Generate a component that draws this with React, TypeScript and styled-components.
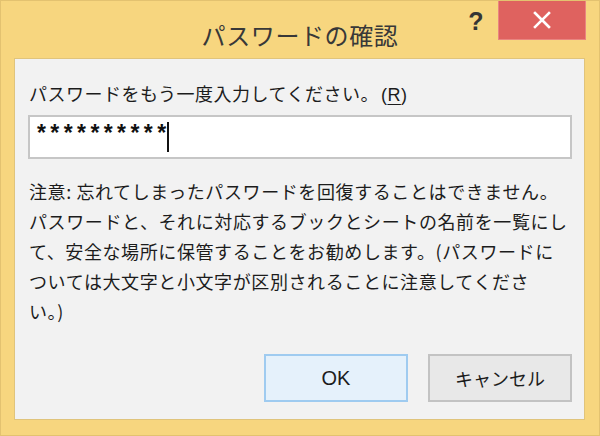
import React from "react";
import styled, { createGlobalStyle } from "styled-components";

const Global = createGlobalStyle`
  html, body { margin: 0; padding: 0; }
  body {
    width: 600px;
    height: 436px;
    overflow: hidden;
    font-family: "Noto Sans CJK JP", "Noto Sans", sans-serif;
    background: #f6d57e;
  }
`;

const Window = styled.div`
  box-sizing: border-box;
  width: 600px;
  height: 436px;
  display: flex;
  flex-direction: column;
  background: #f7d67f;
  border: 1px solid #e3c270;
`;

const TitleBar = styled.div`
  height: 57px;
  display: grid;
  grid-template-columns: 1fr auto 1fr;
  align-items: start;
  flex-shrink: 0;
`;

const Title = styled.div`
  grid-column: 2;
  margin-top: 19px;
  font-size: 24px;
  line-height: 30px;
  letter-spacing: 0.6px;
  color: #383838;
  white-space: nowrap;
`;

const Controls = styled.div`
  grid-column: 3;
  justify-self: end;
  display: flex;
  align-items: flex-start;
  margin-right: 13px;
`;

const HelpButton = styled.div`
  width: 44px;
  height: 39px;
  display: flex;
  justify-content: center;
  padding-top: 6px;
  box-sizing: border-box;
  font-family: "Liberation Sans", Arial, sans-serif;
  font-weight: bold;
  font-size: 25px;
  line-height: 28px;
  color: #353535;
`;

const CloseButton = styled.div`
  width: 88px;
  height: 39px;
  background: #df625f;
  border: 1px solid #e98580;
  border-top: none;
  box-sizing: border-box;
  display: flex;
  align-items: center;
  justify-content: center;
`;

const Panel = styled.div`
  flex: 1;
  margin: 0 14px 15px 13px;
  background: #f2f2f2;
  border: 1px solid #e0c47c;
  box-sizing: border-box;
  display: flex;
  flex-direction: column;
  padding: 21px 12px 17px 13px;
  color: #1c1c1c;
`;

const Label = styled.div`
  font-size: 18px;
  line-height: 26px;
  letter-spacing: 0.5px;
  white-space: nowrap;
  padding-left: 1px;
`;

const Latin = styled.span`
  font-family: "Liberation Sans", Arial, sans-serif;
  letter-spacing: 0.5px;
  margin-left: 2px;
`;

const Underlined = styled.span`
  text-decoration: underline;
  text-underline-offset: 3px;
`;

const InputBox = styled.div`
  margin-top: 7px;
  height: 44px;
  box-sizing: border-box;
  background: #ffffff;
  border: 2px solid #c6c6c6;
  display: flex;
  align-items: center;
  padding-left: 7px;
`;

const Masked = styled.span`
  font-family: "Liberation Sans", Arial, sans-serif;
  font-weight: bold;
  font-size: 23px;
  line-height: 30px;
  letter-spacing: 4.4px;
  color: #111;
  position: relative;
  top: -4px;
  margin-right: -4.4px;
`;

const Caret = styled.span`
  display: inline-block;
  width: 2px;
  height: 30px;
  background: #111;
  margin-left: 1px;
`;

const Notice = styled.div`
  margin-top: 17px;
  font-size: 18px;
  line-height: 30px;
  letter-spacing: 0.6px;
  padding-left: 1px;
`;

const NoticeLine = styled.div`
  white-space: nowrap;
`;

const ButtonRow = styled.div`
  margin-top: auto;
  display: flex;
  justify-content: flex-end;
  gap: 20px;
`;

const Button = styled.div<{ $primary?: boolean }>`
  width: 144px;
  height: 48px;
  box-sizing: border-box;
  display: flex;
  align-items: center;
  justify-content: center;
  font-size: 18px;
  color: #1c1c1c;
  background: ${(p) => (p.$primary ? "#e5f1fb" : "#e8e8e8")};
  border: 2px solid ${(p) => (p.$primary ? "#9fcbf0" : "#c3c3c3")};
`;

const OkText = styled.span`
  font-family: "Liberation Sans", Arial, sans-serif;
  font-size: 20px;
`;

export default function App() {
  return (
    <>
      <Global />
      <Window>
        <TitleBar>
          <Title>パスワードの確認</Title>
          <Controls>
            <HelpButton>?</HelpButton>
            <CloseButton>
              <svg width="18" height="18" viewBox="0 0 18 18">
                <path
                  d="M2 2 L16 16 M16 2 L2 16"
                  stroke="#ffffff"
                  strokeWidth="2.6"
                  strokeLinecap="square"
                  fill="none"
                />
              </svg>
            </CloseButton>
          </Controls>
        </TitleBar>
        <Panel>
          <Label>
            パスワードをもう一度入力してください。
            <Latin>
              (<Underlined>R</Underlined>)
            </Latin>
          </Label>
          <InputBox>
            <Masked>**********</Masked>
            <Caret />
          </InputBox>
          <Notice>
            <NoticeLine>注意: 忘れてしまったパスワードを回復することはできません。</NoticeLine>
            <NoticeLine>パスワードと、それに対応するブックとシートの名前を一覧にし</NoticeLine>
            <NoticeLine>て、安全な場所に保管することをお勧めします。(パスワードに</NoticeLine>
            <NoticeLine>ついては大文字と小文字が区別されることに注意してくださ</NoticeLine>
            <NoticeLine>い。)</NoticeLine>
          </Notice>
          <ButtonRow>
            <Button $primary>
              <OkText>OK</OkText>
            </Button>
            <Button>キャンセル</Button>
          </ButtonRow>
        </Panel>
      </Window>
    </>
  );
}
